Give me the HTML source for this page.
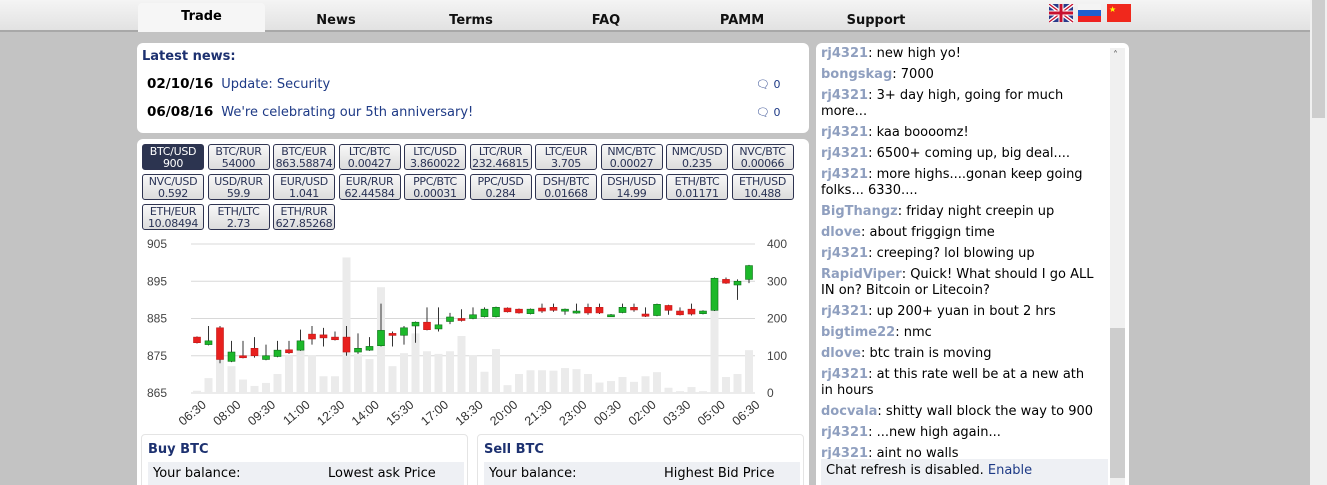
<!DOCTYPE html>
<html style="height:485px;overflow:hidden"><head><meta charset="utf-8"><style>
*{margin:0;padding:0;box-sizing:border-box}
body{width:1327px;height:485px;overflow:hidden;background:#c3c3c3;font-family:"DejaVu Sans","Liberation Sans",sans-serif;position:relative}
#nav{position:absolute;left:0;top:0;width:1310px;height:32px;background:linear-gradient(#f4f4f4,#e2e2e2);border-bottom:2px solid #a8a8a8}
.tab{position:absolute;top:13px;font:bold 13px "DejaVu Sans",sans-serif;color:#111;text-align:center;width:130px}
#trade{position:absolute;left:138px;top:3px;width:127px;height:29px;background:#f6f6f6;border-radius:4px 4px 0 0;font:bold 13px "DejaVu Sans",sans-serif;text-align:center;padding-top:6px}
#sb{position:absolute;left:1310px;top:0;width:17px;height:485px;background:#f0f0f0}
#sb div{position:absolute;left:2px;top:0;width:13px;height:118px;background:#cdcdcd}
.panel{position:absolute;background:#fff;border-radius:6px;overflow:hidden}
.nt{font:bold 13px "DejaVu Sans",sans-serif;color:#1d3170}
.row{position:absolute;font-size:13px}
.row b{color:#000;margin-right:8px;font-size:13.5px}
.row span{color:#1e3a86}
.cm{position:absolute;font-size:11px;color:#1e3a86}
.tk{position:absolute;width:62px;height:26px;border:1px solid #2e3350;border-radius:3px;background:linear-gradient(#f8f8f8,#dcdcdc);font-size:11px;line-height:12px;text-align:center;color:#2a3355;padding-top:1px;letter-spacing:-0.3px;white-space:nowrap}
.tk.a{background:#2c3450;color:#fff}
#chat{position:absolute;left:816px;top:43px;width:313px;height:442px;background:#fff;border-radius:6px 6px 0 0;overflow:hidden}
.cl{position:absolute;left:5px;font-size:13px;line-height:16px;color:#000;white-space:nowrap}
.cl b{color:#8f9fbf}
#csb{position:absolute;left:294px;top:5px;width:15px;height:437px;background:#f0f0f0}
#csb div{position:absolute;left:0;top:280px;width:15px;height:150px;background:#cdcdcd}
.box{position:absolute;top:295px;width:327px;height:60px;border:1px solid #e4e4e4;border-radius:4px;background:#fff}
.box .h{position:absolute;left:6px;top:7px;font:bold 13px "DejaVu Sans",sans-serif;color:#1d3170}
.box .r{position:absolute;left:6px;top:27px;width:316px;height:30px;background:#eef0f4;font-size:13px;padding:4px 5px}
</style></head><body>
<div id="nav">
<div id="trade">Trade</div>
<div class="tab" style="left:271px">News</div>
<div class="tab" style="left:406px">Terms</div>
<div class="tab" style="left:541px">FAQ</div>
<div class="tab" style="left:677px">PAMM</div>
<div class="tab" style="left:811px">Support</div>
<svg style="position:absolute;left:1049px;top:4px" width="83" height="19">
<g><rect x="0" y="0" width="24" height="18" fill="#2a3a8a"/><path d="M0 0L24 18M24 0L0 18" stroke="#fff" stroke-width="4"/><path d="M0 0L24 18M24 0L0 18" stroke="#c8102e" stroke-width="1.3"/><path d="M12 0V18M0 9H24" stroke="#fff" stroke-width="5"/><path d="M12 0V18M0 9H24" stroke="#c8102e" stroke-width="3"/></g>
<g transform="translate(29,0)"><rect width="23" height="6" fill="#f4f4f4"/><rect y="6" width="23" height="6" fill="#1f5fd0"/><rect y="12" width="23" height="6" fill="#e22"/></g>
<g transform="translate(58,0)"><rect width="24" height="18" fill="#f0281c"/><text x="2" y="8" font-size="8" fill="#ff0">★</text></g>
</svg>
</div>
<div id="sb"><div></div></div>

<div class="panel" style="left:137px;top:43px;width:672px;height:90px">
<div class="nt" style="position:absolute;left:5px;top:6px">Latest news:</div>
<div class="row" style="left:10px;top:33px"><b>02/10/16</b><span>Update: Security</span></div>
<div class="row" style="left:10px;top:61px"><b>06/08/16</b><span>We're celebrating our 5th anniversary!</span></div>
<div class="cm" style="left:619px;top:35px">🗨 0</div>
<div class="cm" style="left:619px;top:63px">🗨 0</div>
</div>

<div class="panel" style="left:137px;top:139px;width:672px;height:346px;border-radius:6px 6px 0 0">
<div id="tks"></div>
<svg id="ch" style="position:absolute;left:0;top:95px" width="672" height="200" font-family="Liberation Sans,sans-serif" font-size="12" fill="#444"></svg>
<div class="box" style="left:4px"><div class="h">Buy BTC</div><div class="r">Your balance:<span style="position:absolute;left:180px">Lowest ask Price</span></div></div>
<div class="box" style="left:340px"><div class="h">Sell BTC</div><div class="r">Your balance:<span style="position:absolute;left:180px">Highest Bid Price</span></div></div>
</div>

<div id="chat">
<div id="cls"></div>
<div style="position:absolute;left:5px;top:416px;width:287px;height:30px;background:#eef0f4;font-size:13px;padding:4px 5px">Chat refresh is disabled. <span style="color:#1e3a86">Enable</span></div>
<div id="csb"><div></div><span style="position:absolute;left:3px;top:2px;font-size:10px;color:#555">˄</span></div>
</div>

<script>
var T=[["BTC/USD","900"],["BTC/RUR","54000"],["BTC/EUR","863.58874"],["LTC/BTC","0.00427"],["LTC/USD","3.860022"],["LTC/RUR","232.46815"],["LTC/EUR","3.705"],["NMC/BTC","0.00027"],["NMC/USD","0.235"],["NVC/BTC","0.00066"],["NVC/USD","0.592"],["USD/RUR","59.9"],["EUR/USD","1.041"],["EUR/RUR","62.44584"],["PPC/BTC","0.00031"],["PPC/USD","0.284"],["DSH/BTC","0.01668"],["DSH/USD","14.99"],["ETH/BTC","0.01171"],["ETH/USD","10.488"],["ETH/EUR","10.08494"],["ETH/LTC","2.73"],["ETH/RUR","627.85268"]];
var h="";T.forEach(function(t,i){h+='<div class="tk'+(i?'':' a')+'" style="left:'+(5+(i%10)*65.5)+'px;top:'+(5+Math.floor(i/10)*30)+'px">'+t[0]+'<br>'+t[1]+'</div>'});
document.getElementById("tks").innerHTML=h;
var C=[[880,878.5,880.2,878.3,6],[878,879,883,877.8,40],[882.5,874,883,873,95],[873.5,876,879,873.3,72],[875,874.5,879,874.3,36],[877,875,880,874.5,19],[874,875,878,873.8,27],[874.8,876.5,879,874.6,51],[876.6,875.8,879,875.5,100],[876.5,879,882,876.3,122],[880.8,879.5,883,878,101],[880.6,879.8,882.5,877.5,45],[880,879.3,881.5,879.1,45],[880,876,883,875,364],[876,877,881,875.5,104],[876.5,877.5,880,876.3,91],[877.7,881.8,889,877.5,284],[881,880.5,881.5,877.5,72],[880.5,882.5,883,878,107],[883,884,884.2,878.5,160],[884,882,888,881.8,112],[882.2,883.3,888,881.5,105],[884.2,885.4,886.5,883.5,112],[885,884.5,887.5,884.2,153],[885,886,888,884.8,101],[885.5,887.5,888,885.3,57],[885.5,888,888.2,885.3,118],[887.8,886.8,888,886.6,21],[887.5,886.5,887.7,886.3,51],[886.3,887.5,887.7,886.1,61],[887.8,887,889,886.5,61],[888,887.2,889,886.8,60],[887,887.5,887.7,886,67],[886.5,887,889,886.3,64],[888,886.5,889,886,51],[888,886.5,889,886.2,28],[885.8,886,886.2,885.6,32],[886.6,888,889,886.4,43],[888,887.3,889,886.8,30],[886.2,885.6,888,885.4,45],[885.8,888.8,889,885.6,56],[888.5,887.2,888.7,886,14],[887,886,888,885.8,5],[887.5,886.2,889,885.8,16],[886.3,887,887.2,886.1,5],[887.2,895.8,896,887,300],[895.5,894.5,896,894.3,43],[894,895,895.5,890,51],[895.5,899.2,899.4,894.5,115]];
var TP=10,BT=159,L=54,R=618;function py(p){return TP+(905-p)*(BT-TP)/40}function vy(v){return BT-v*(BT-TP)/400}
var s="";
[905,895,885,875,865].forEach(function(p,i){var y=py(p);s+='<line x1="'+L+'" x2="'+R+'" y1="'+y+'" y2="'+y+'" stroke="#d8d8d8"/>';s+='<text x="10" y="'+(y+4)+'">'+p+'</text><text x="630" y="'+(y+4)+'">'+(400-i*100)+'</text>'});
var x0=60,dx=11.5;
C.forEach(function(c,i){var x=x0+i*dx;s+='<rect x="'+(x-4)+'" y="'+vy(c[4])+'" width="8" height="'+(BT-vy(c[4]))+'" fill="#ebebeb"/>'});
C.forEach(function(c,i){var x=x0+i*dx,up=c[1]>=c[0];var t=py(Math.max(c[0],c[1])),b=py(Math.min(c[0],c[1]));if(b-t<2)b=t+2;
s+='<line x1="'+x+'" x2="'+x+'" y1="'+py(c[2])+'" y2="'+py(c[3])+'" stroke="#333"/>';
s+='<rect x="'+(x-3.5)+'" y="'+t+'" width="7" height="'+(b-t)+'" fill="'+(up?'#1cb82a':'#e8201e')+'" stroke="'+(up?'#0d6e18':'#c01818')+'" stroke-width="0.6"/>'});
var lb=["06:30","08:00","09:30","11:00","12:30","14:00","15:30","17:00","18:30","20:00","21:30","23:00","00:30","02:00","03:30","05:00","06:30"];
lb.forEach(function(t,i){var x=70+i*34.6;s+='<text transform="translate('+x+',172) rotate(-40)" text-anchor="end" fill="#333" font-size="12.5">'+t+'</text>'});
document.getElementById("ch").innerHTML=s;
var M=[["rj4321","new high yo!"],["bongskag","7000"],["rj4321","3+ day high, going for much","more..."],["rj4321","kaa boooomz!"],["rj4321","6500+ coming up, big deal...."],["rj4321","more highs....gonan keep going","folks... 6330...."],["BigThangz","friday night creepin up"],["dlove","about friggign time"],["rj4321","creeping? lol blowing up"],["RapidViper","Quick! What should I go ALL","IN on? Bitcoin or Litecoin?"],["rj4321","up 200+ yuan in bout 2 hrs"],["bigtime22","nmc"],["dlove","btc train is moving"],["rj4321","at this rate well be at a new ath","in hours"],["docvala","shitty wall block the way to 900"],["rj4321","...new high again..."],["rj4321","aint no walls"]];
var y=3,q="";M.forEach(function(m){q+='<div class="cl" style="top:'+y+'px"><b>'+m[0]+'</b>: '+m[1]+(m[2]?'<br>'+m[2]:'')+'</div>';y+=(m[2]?37:21)});
document.getElementById("cls").innerHTML=q;
</script>
</body></html>
